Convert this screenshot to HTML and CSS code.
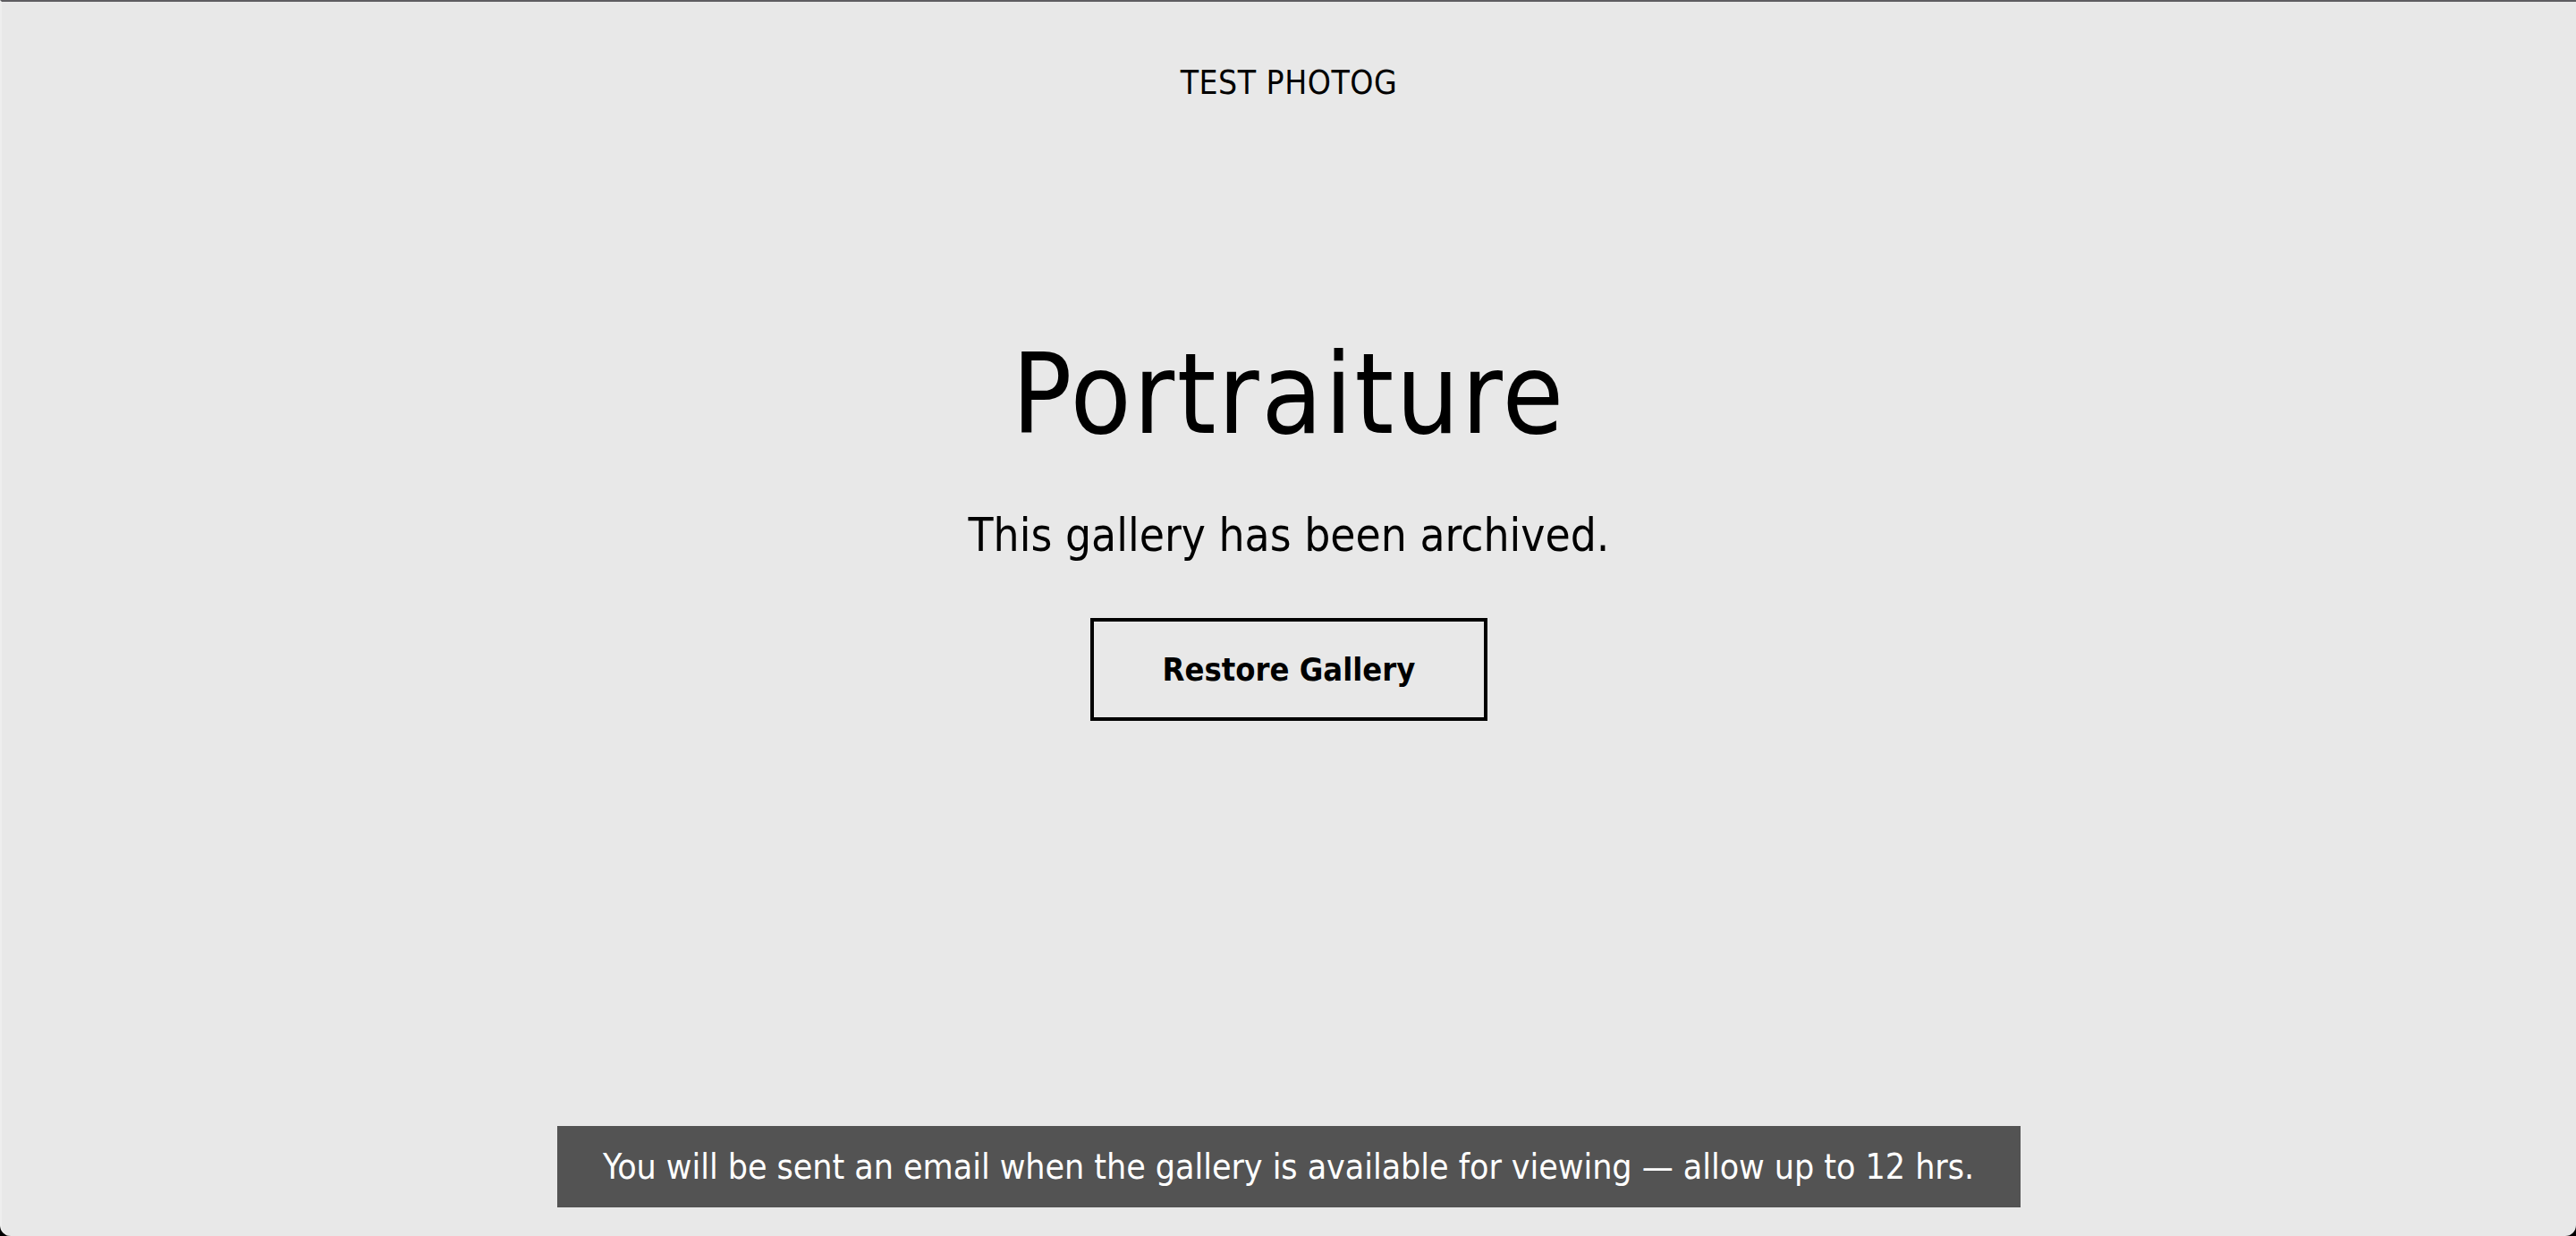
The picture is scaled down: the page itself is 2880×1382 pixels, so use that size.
FILE: index.html
```html
<!DOCTYPE html>
<html lang="en">
<head>
<meta charset="utf-8">
<title>Portraiture</title>
<link rel="stylesheet" href="styles.css">
</head>
<body>
<div class="window">
  <header class="brand">TEST PHOTOG</header>
  <main class="archived">
    <h1 class="title">Portraiture</h1>
    <p class="message">This gallery has been archived.</p>
    <button class="restore" type="button">Restore Gallery</button>
  </main>
  <footer class="notice">
    <div class="notice-bar">You will be sent an email when the gallery is available for viewing — allow up to 12 hrs.</div>
  </footer>
</div>
</body>
</html>
```

FILE: styles.css
```css
html, body {
  margin: 0;
  padding: 0;
  height: 100%;
  background: #000;
}
body {
  font-family: "DejaVu Sans Condensed", "DejaVu Sans", sans-serif;
  color: #000;
}
.window {
  box-sizing: border-box;
  height: 1382px;
  background: #e8e8e8;
  border-top: 2px solid #5e5d61;
  border-left: 2px solid #eeeeee;
  border-radius: 0 0 12px 12px;
  display: flex;
  flex-direction: column;
  align-items: center;
}
.brand {
  margin-top: 68px;
  font-size: 37px;
  line-height: 46px;
  letter-spacing: 0.5px;
}
.archived {
  flex: 1;
  display: flex;
  flex-direction: column;
  align-items: center;
}
.title {
  margin: 250px 0 0;
  font-size: 124px;
  font-weight: normal;
  line-height: 150px;
  letter-spacing: 2.5px;
}
.message {
  margin: 53px 0 0;
  font-size: 51px;
  line-height: 60px;
  letter-spacing: 0;
}
.restore {
  margin-top: 62px;
  box-sizing: border-box;
  width: 444px;
  height: 115px;
  background: transparent;
  border: 4px solid #000;
  font-family: inherit;
  font-size: 36px;
  font-weight: bold;
  color: #000;
  padding: 0;
}
.notice {
  margin-bottom: 32px;
}
.notice-bar {
  box-sizing: border-box;
  height: 91px;
  padding: 0 52px 0 51px;
  background: #535353;
  color: #fff;
  font-size: 39px;
  letter-spacing: -0.05px;
  display: flex;
  align-items: center;
}
```
